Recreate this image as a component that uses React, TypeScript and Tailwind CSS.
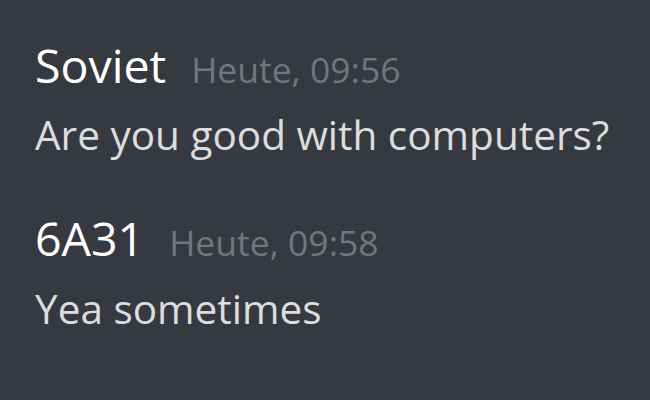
import React from 'react';

interface Message {
  id: string;
  author: string;
  time: string;
  text: string;
}

const messages: Message[] = [
  { id: '1', author: 'Soviet', time: 'Heute, 09:56', text: 'Are you good with computers?' },
  { id: '2', author: '6A31', time: 'Heute, 09:58', text: 'Yea sometimes' },
];

const App = () => {
  return (
    <div
      className="w-[650px] h-[400px] bg-[#36393f] overflow-hidden pt-[35px] px-[35px]"
      style={{ fontFamily: '"Open Sans", "Noto Sans", sans-serif' }}
    >
      <div className="flex flex-col gap-[47px]">
        {messages.map((msg, i) => (
          <div key={msg.id} className={i === 0 ? 'flex flex-col gap-[10px]' : 'flex flex-col gap-[11px]'}>
            <div className="flex items-baseline gap-[25px]">
              <span className="text-white text-[46.5px] leading-[60px]">{msg.author}</span>
              <span className="text-[#72767d] text-[35.5px] leading-[60px]">{msg.time}</span>
            </div>
            <p className="text-[#dcddde] text-[40.5px] leading-[52px] whitespace-nowrap">{msg.text}</p>
          </div>
        ))}
      </div>
    </div>
  );
};

export default App;
